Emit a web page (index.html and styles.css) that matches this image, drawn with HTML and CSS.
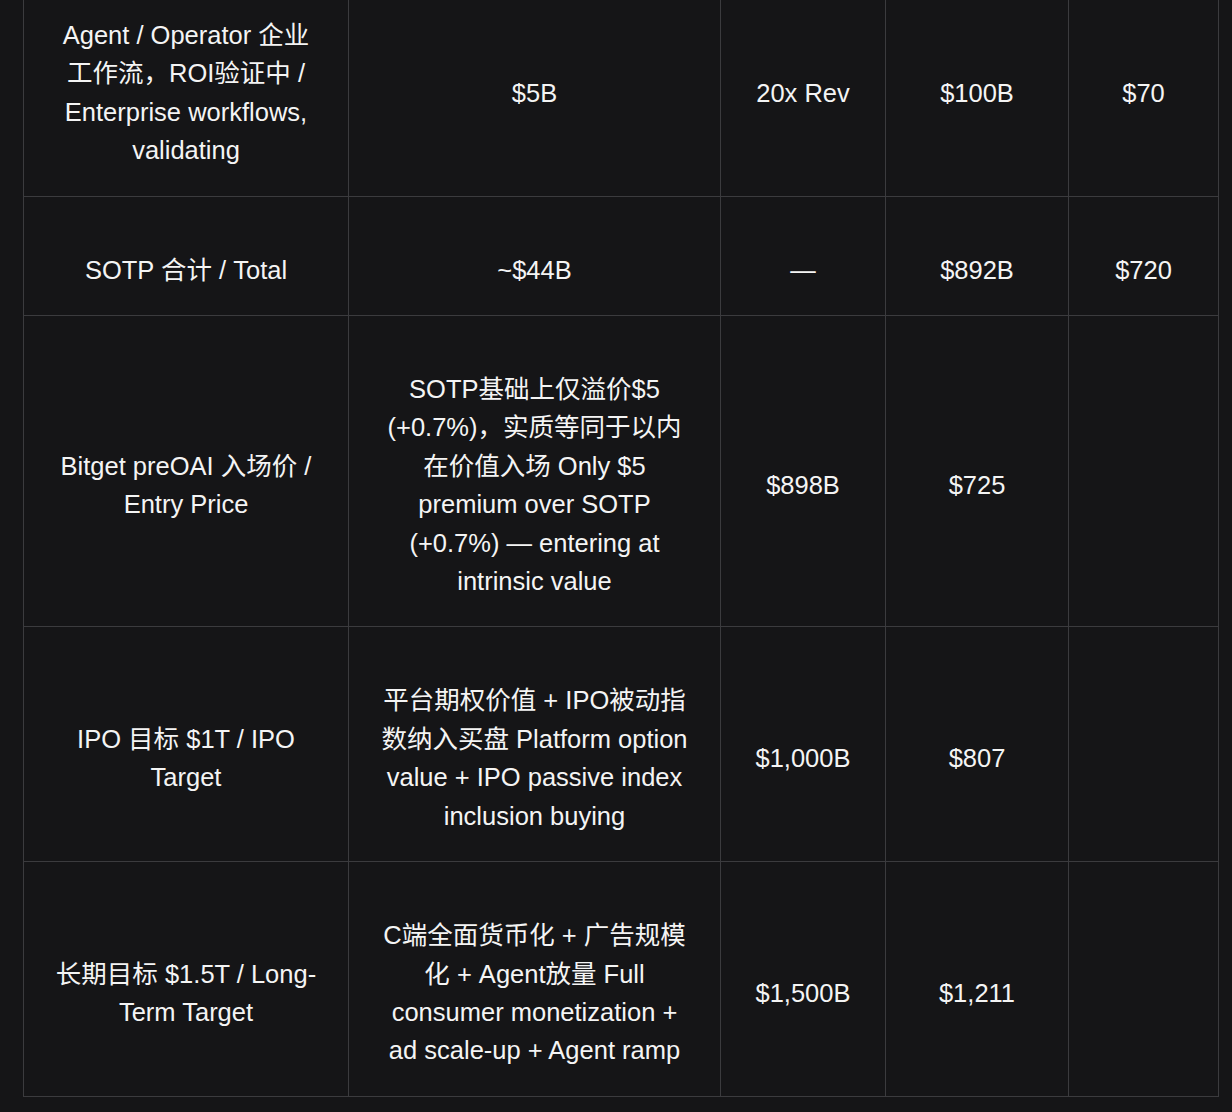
FILE: index.html
```html
<!DOCTYPE html>
<html lang="zh-CN">
<head>
<meta charset="utf-8">
<title>SOTP</title>
<link rel="stylesheet" href="styles.css">
</head>
<body>
<div class="wrap">
<table class="sotp">
<colgroup>
<col class="c1"><col class="c2"><col class="c3"><col class="c4"><col class="c5">
</colgroup>
<tbody>
<tr>
<td>Agent / Operator 企业工作流，ROI验证中 / Enterprise workflows, validating</td>
<td>$5B</td>
<td>20x Rev</td>
<td>$100B</td>
<td>$70</td>
</tr>
<tr>
<td>SOTP 合计 / Total</td>
<td>~$44B</td>
<td>—</td>
<td>$892B</td>
<td>$720</td>
</tr>
<tr>
<td>Bitget preOAI 入场价 / Entry Price</td>
<td>SOTP基础上仅溢价$5 (+0.7%)，实质等同于以内在价值入场 Only $5 premium over SOTP (+0.7%) — entering at intrinsic value</td>
<td>$898B</td>
<td>$725</td>
<td></td>
</tr>
<tr>
<td>IPO 目标 $1T / IPO Target</td>
<td>平台期权价值 + IPO被动指数纳入买盘 Platform option value + IPO passive index inclusion buying</td>
<td>$1,000B</td>
<td>$807</td>
<td></td>
</tr>
<tr>
<td>长期目标 $1.5T / Long-Term Target</td>
<td>C端全面货币化 + 广告规模化 + Agent放量 Full consumer monetization + ad scale-up + Agent ramp</td>
<td>$1,500B</td>
<td>$1,211</td>
<td></td>
</tr>
</tbody>
</table>
</div>
</body>
</html>
```
FILE: styles.css
```css
html, body {
  margin: 0;
  padding: 0;
  background: #151517;
}
body {
  font-family: "Liberation Sans", Arial, "Noto Sans CJK SC", sans-serif;
  color: #f4f4f4;
  overflow: hidden;
  height: 1112px;
}
.wrap {
  padding-left: 23px;
  margin-top: -39px;
}
.sotp {
  border-collapse: collapse;
  table-layout: fixed;
  width: 1195px;
  font-size: 25.5px;
  line-height: 38.4px;
}
.c1 { width: 325px; }
.c2 { width: 372px; }
.c3 { width: 165px; }
.c4 { width: 183px; }
.c5 { width: 150px; }
.sotp td {
  border: 1px solid #3b3b3e;
  padding: 54px 30px 26px;
  text-align: center;
  vertical-align: middle;
  background: #151517;
}
```
